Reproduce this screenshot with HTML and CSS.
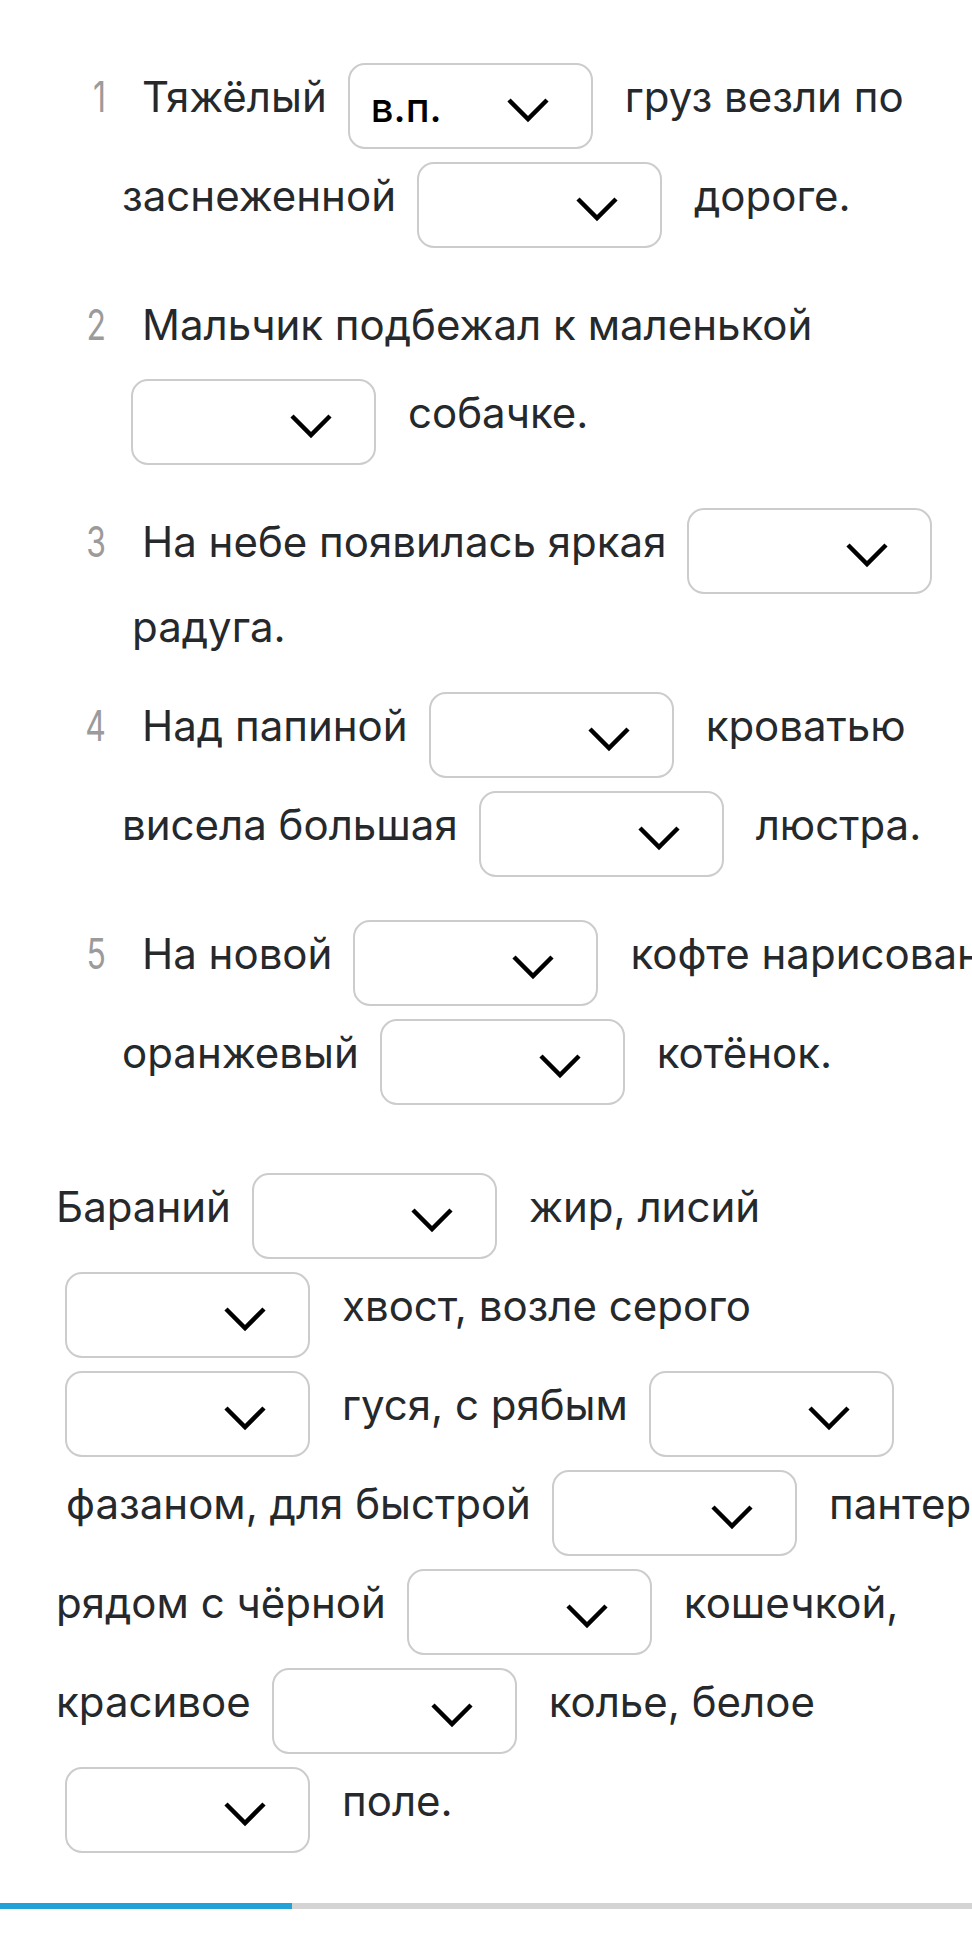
FILE: index.html
```html
<!DOCTYPE html>
<html lang="ru">
<head>
<meta charset="utf-8">
<title>Упражнение</title>
<link rel="stylesheet" href="styles.css">
</head>
<body>
<main class="page">
  <section class="items">
    <div class="item">
      <div class="row first"><span class="num">1</span><span class="t">Тяжёлый</span><span class="dd"><span class="dd-val">в.п.</span><svg class="chev" viewBox="0 0 44 26" width="44" height="26"><path d="M3 3 L22 22 L41 3"/></svg></span><span class="t">груз везли по</span></div>
      <div class="row cont"><span class="t">заснеженной</span><span class="dd"><span class="dd-val"></span><svg class="chev" viewBox="0 0 44 26" width="44" height="26"><path d="M3 3 L22 22 L41 3"/></svg></span><span class="t">дороге.</span></div>
    </div>
    <div class="item">
      <div class="row first textonly"><span class="num">2</span><span class="t">Мальчик подбежал к маленькой</span></div>
      <div class="row cont"><span class="dd lead"><span class="dd-val"></span><svg class="chev" viewBox="0 0 44 26" width="44" height="26"><path d="M3 3 L22 22 L41 3"/></svg></span><span class="t">собачке.</span></div>
    </div>
    <div class="item">
      <div class="row first"><span class="num">3</span><span class="t">На небе появилась яркая</span><span class="dd"><span class="dd-val"></span><svg class="chev" viewBox="0 0 44 26" width="44" height="26"><path d="M3 3 L22 22 L41 3"/></svg></span></div>
      <div class="row cont tail"><span class="t after-box">радуга.</span></div>
    </div>
    <div class="item">
      <div class="row first"><span class="num">4</span><span class="t">Над папиной</span><span class="dd"><span class="dd-val"></span><svg class="chev" viewBox="0 0 44 26" width="44" height="26"><path d="M3 3 L22 22 L41 3"/></svg></span><span class="t">кроватью</span></div>
      <div class="row cont"><span class="t">висела большая</span><span class="dd"><span class="dd-val"></span><svg class="chev" viewBox="0 0 44 26" width="44" height="26"><path d="M3 3 L22 22 L41 3"/></svg></span><span class="t">люстра.</span></div>
    </div>
    <div class="item">
      <div class="row first"><span class="num">5</span><span class="t">На новой</span><span class="dd"><span class="dd-val"></span><svg class="chev" viewBox="0 0 44 26" width="44" height="26"><path d="M3 3 L22 22 L41 3"/></svg></span><span class="t">кофте нарисован</span></div>
      <div class="row cont"><span class="t">оранжевый</span><span class="dd"><span class="dd-val"></span><svg class="chev" viewBox="0 0 44 26" width="44" height="26"><path d="M3 3 L22 22 L41 3"/></svg></span><span class="t">котёнок.</span></div>
    </div>
  </section>

  <section class="passage">
    <div class="row"><span class="t">Бараний</span><span class="dd"><span class="dd-val"></span><svg class="chev" viewBox="0 0 44 26" width="44" height="26"><path d="M3 3 L22 22 L41 3"/></svg></span><span class="t">жир, лисий</span></div>
    <div class="row"><span class="dd lead"><span class="dd-val"></span><svg class="chev" viewBox="0 0 44 26" width="44" height="26"><path d="M3 3 L22 22 L41 3"/></svg></span><span class="t">хвост, возле серого</span></div>
    <div class="row"><span class="dd lead"><span class="dd-val"></span><svg class="chev" viewBox="0 0 44 26" width="44" height="26"><path d="M3 3 L22 22 L41 3"/></svg></span><span class="t">гуся, с рябым</span><span class="dd"><span class="dd-val"></span><svg class="chev" viewBox="0 0 44 26" width="44" height="26"><path d="M3 3 L22 22 L41 3"/></svg></span></div>
    <div class="row"><span class="t after-box">фазаном, для быстрой</span><span class="dd"><span class="dd-val"></span><svg class="chev" viewBox="0 0 44 26" width="44" height="26"><path d="M3 3 L22 22 L41 3"/></svg></span><span class="t">пантеры,</span></div>
    <div class="row"><span class="t">рядом с чёрной</span><span class="dd"><span class="dd-val"></span><svg class="chev" viewBox="0 0 44 26" width="44" height="26"><path d="M3 3 L22 22 L41 3"/></svg></span><span class="t">кошечкой,</span></div>
    <div class="row"><span class="t">красивое</span><span class="dd"><span class="dd-val"></span><svg class="chev" viewBox="0 0 44 26" width="44" height="26"><path d="M3 3 L22 22 L41 3"/></svg></span><span class="t">колье, белое</span></div>
    <div class="row"><span class="dd lead"><span class="dd-val"></span><svg class="chev" viewBox="0 0 44 26" width="44" height="26"><path d="M3 3 L22 22 L41 3"/></svg></span><span class="t">поле.</span></div>
  </section>

  <div class="progress"><div class="progress-fill" style="width: 292px"></div></div>
</main>
</body>
</html>
```

FILE: styles.css
```css
html, body {
  margin: 0;
  padding: 0;
  background: #ffffff;
  overflow-x: hidden;
}

.page {
  padding-top: 56px;
  font-family: Inter, "Noto Sans", sans-serif;
  font-size: 42px;
  color: #26292c;
  width: 972px;
  overflow: hidden;
}

.items {
  display: flex;
  flex-direction: column;
}

.item {
  display: flex;
  flex-direction: column;
  margin-bottom: 30px;
}

.row {
  display: flex;
  align-items: flex-start;
  height: 99px;
  white-space: nowrap;
  flex-shrink: 0;
}

.item .row.first {
  padding-left: 66px;
}

.item .row.cont {
  padding-left: 122px;
}

.row.textonly {
  height: 88px;
}

.row.tail {
  margin-top: -14px;
  height: 69px;
}

.num {
  display: inline-block;
  width: 40px;
  margin-right: 36px;
  text-align: right;
  color: #9b9b9b;
  line-height: 42px;
  padding-top: 20px;
  transform: scaleX(0.76);
  transform-origin: right center;
  flex-shrink: 0;
}

.t {
  display: inline-block;
  line-height: 42px;
  padding-top: 20px;
  flex-shrink: 0;
}

.t.after-box {
  margin-left: 10px;
}

.dd {
  box-sizing: border-box;
  flex-shrink: 0;
  width: 245px;
  height: 86px;
  margin: 7px 32px 0 21px;
  border: 2px solid #cccccc;
  border-radius: 17px;
  background: #ffffff;
  display: flex;
  align-items: center;
  justify-content: space-between;
  padding: 0 41px 0 21px;
}

.dd.lead {
  margin-left: 9px;
}

.dd-val {
  font-size: 40px;
  font-weight: 500;
  color: #000000;
  line-height: 40px;
  margin-top: 4px;
}

.chev {
  display: block;
  margin-top: 8px;
  fill: none;
  stroke: #000000;
  stroke-width: 4.5;
  stroke-linejoin: miter;
}

.passage {
  margin-top: 25px;
  padding-left: 56px;
  display: flex;
  flex-direction: column;
}

.progress {
  margin-top: 44px;
  height: 6px;
  width: 972px;
  background: #d4d4d4;
}

.progress-fill {
  height: 6px;
  background: #21a3d8;
}
```
